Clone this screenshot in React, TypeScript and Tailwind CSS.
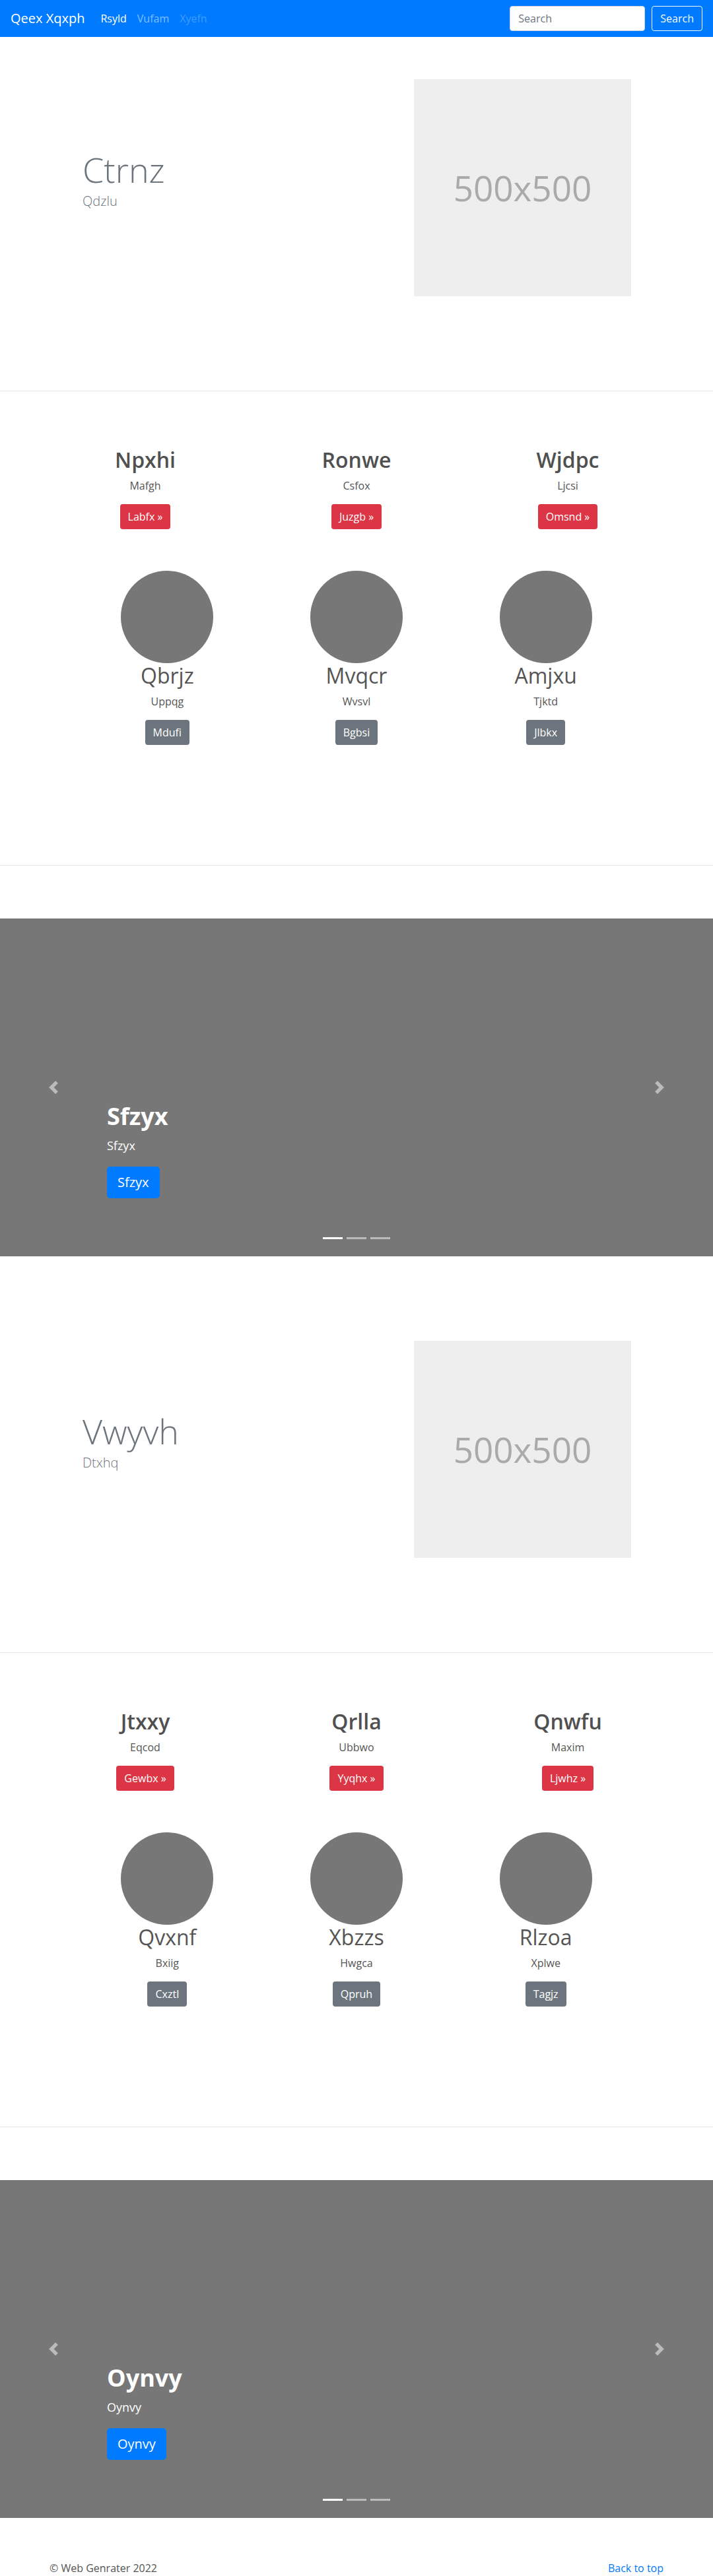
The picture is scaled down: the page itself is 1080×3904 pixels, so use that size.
import React from "react";

const F = "font-['Open_Sans','Noto_Sans',sans-serif]";

function Chevron({ dir }: { dir: "left" | "right" }) {
  return (
    <svg width="20" height="20" viewBox="0 0 8 8" fill="rgba(255,255,255,0.5)">
      {dir === "left" ? (
        <path d="M5.25 0l-4 4 4 4 1.5-1.5L4.25 4l2.5-2.5L5.25 0z" />
      ) : (
        <path d="M2.75 0l-1.5 1.5L3.75 4l-2.5 2.5L2.75 8l4-4-4-4z" />
      )}
    </svg>
  );
}

function Hero({ title, sub }: { title: string; sub: string }) {
  return (
    <section className="pt-16 pb-[143px]">
      <div className="w-[960px] mx-auto px-[15px] flex">
        <div className="w-[552px] pl-[50px] pt-[106px]">
          <h1 className="text-[52px] leading-[1.2] font-light text-[#6c757d]">{title}</h1>
          <p className="mt-[2px] text-[20px] leading-[1.5] font-light text-[#6c757d]">{sub}</p>
        </div>
        <div className="w-[329px] h-[329px] bg-[#eeeeee] flex items-center justify-center text-[53px] text-[#aaaaaa]">
          500x500
        </div>
      </div>
    </section>
  );
}

type Feat = { h: string; p: string; b: string };

function Features({ top, bottom }: { top: Feat[]; bottom: Feat[] }) {
  return (
    <section className="border-t border-[#e5e5e5] pt-[85px] pb-[182px]">
      <div className="w-[960px] mx-auto grid grid-cols-3">
        {top.map((f) => (
          <div key={f.h} className="flex flex-col items-center text-center">
            <h2 className="text-[32px] leading-[38px] font-semibold text-[#505050]">{f.h}</h2>
            <p className="mt-2 text-[16px] leading-[24px] text-[#555555]">{f.p}</p>
            <a className="mt-4 h-[38px] px-3 flex items-center rounded bg-[#dc3545] text-white text-[16px]">
              {f.b} »
            </a>
          </div>
        ))}
      </div>
      <div className="w-[860px] mx-auto grid grid-cols-3 mt-[63px]">
        {bottom.map((f) => (
          <div key={f.h} className="flex flex-col items-center text-center">
            <div className="w-[140px] h-[140px] rounded-full bg-[#777777]" />
            <h2 className="text-[32px] leading-[38px] font-normal text-[#555555]">{f.h}</h2>
            <p className="mt-2 text-[16px] leading-[24px] text-[#555555]">{f.p}</p>
            <a className="mt-4 h-[38px] px-3 flex items-center rounded bg-[#6c757d] text-white text-[16px]">
              {f.b}
            </a>
          </div>
        ))}
      </div>
    </section>
  );
}

function Carousel({ label }: { label: string }) {
  return (
    <div className="border-t border-[#e5e5e5] pt-[80px] mb-16">
      <div className="relative h-[512px] bg-[#777777] overflow-hidden">
        <div className="absolute left-0 top-0 bottom-0 w-[15%] flex items-center justify-center">
          <Chevron dir="left" />
        </div>
        <div className="absolute right-0 top-0 bottom-0 w-[15%] flex items-center justify-center">
          <Chevron dir="right" />
        </div>
        <div className="absolute left-[15%] right-[15%] bottom-[88px] text-white">
          <h1 className="text-[36px] leading-[1.2] font-bold">{label}</h1>
          <p className="mt-[10px] text-[18px] leading-[1.5]">{label}</p>
          <a className="mt-[18px] inline-flex h-[48px] px-4 items-center rounded-[5px] bg-[#007bff] text-white text-[20px]">
            {label}
          </a>
        </div>
        <div className="absolute left-0 right-0 bottom-[26px] flex justify-center gap-[6px]">
          <span className="w-[30px] h-[3px] bg-white" />
          <span className="w-[30px] h-[3px] bg-white/50" />
          <span className="w-[30px] h-[3px] bg-white/50" />
        </div>
      </div>
    </div>
  );
}

export default function App() {
  return (
    <div className={`${F} bg-white text-[#212529]`}>
      <nav className="h-[56px] bg-[#007bff] flex items-center px-4">
        <a className="text-white text-[20px] leading-[30px] mr-4">Qeex Xqxph</a>
        <ul className="flex text-[16px]">
          <li><a className="px-2 text-white">Rsyld</a></li>
          <li><a className="px-2 text-white/50">Vufam</a></li>
          <li><a className="px-2 text-white/25">Xyefn</a></li>
        </ul>
        <div className="ml-auto flex items-center">
          <input
            placeholder="Search"
            className="w-[205px] h-[38px] bg-white rounded border border-[#ced4da] px-3 text-[16px] placeholder:text-[#6c757d] outline-none"
          />
          <button className="ml-[10px] h-[38px] px-3 border border-[#f8f9fa] rounded text-[#f8f9fa] text-[16px]">
            Search
          </button>
        </div>
      </nav>

      <Hero title="Ctrnz" sub="Qdzlu" />
      <Features
        top={[
          { h: "Npxhi", p: "Mafgh", b: "Labfx" },
          { h: "Ronwe", p: "Csfox", b: "Juzgb" },
          { h: "Wjdpc", p: "Ljcsi", b: "Omsnd" },
        ]}
        bottom={[
          { h: "Qbrjz", p: "Uppqg", b: "Mdufi" },
          { h: "Mvqcr", p: "Wvsvl", b: "Bgbsi" },
          { h: "Amjxu", p: "Tjktd", b: "Jlbkx" },
        ]}
      />
      <Carousel label="Sfzyx" />

      <Hero title="Vwyvh" sub="Dtxhq" />
      <Features
        top={[
          { h: "Jtxxy", p: "Eqcod", b: "Gewbx" },
          { h: "Qrlla", p: "Ubbwo", b: "Yyqhx" },
          { h: "Qnwfu", p: "Maxim", b: "Ljwhz" },
        ]}
        bottom={[
          { h: "Qvxnf", p: "Bxiig", b: "Cxztl" },
          { h: "Xbzzs", p: "Hwgca", b: "Qpruh" },
          { h: "Rlzoa", p: "Xplwe", b: "Tagjz" },
        ]}
      />
      <Carousel label="Oynvy" />

      <footer className="w-[960px] mx-auto px-[15px] flex justify-between text-[16px] leading-[24px] pb-12">
        <p className="text-[#555555]">© Web Genrater 2022</p>
        <a className="text-[#007bff]">Back to top</a>
      </footer>
    </div>
  );
}
